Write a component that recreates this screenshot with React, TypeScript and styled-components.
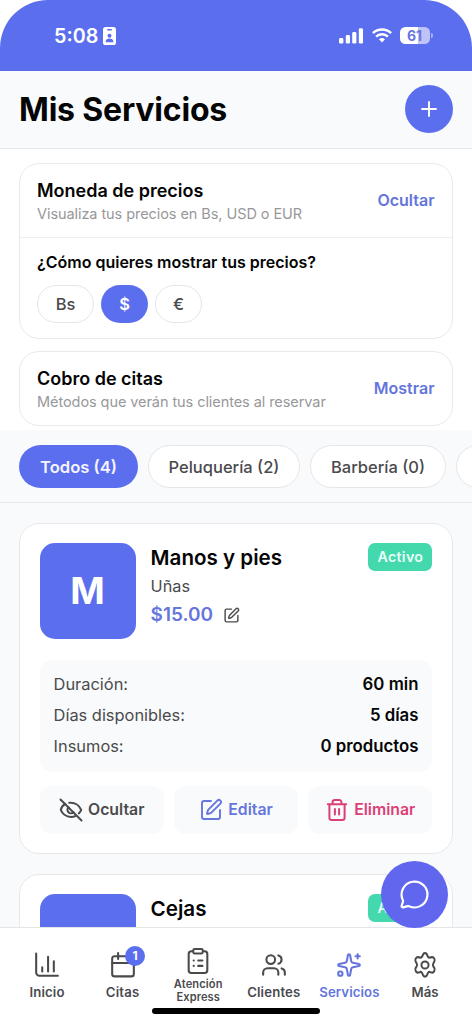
import React from 'react';
import styled, { createGlobalStyle } from 'styled-components';
import { Sparkles, SquarePen, MessageCircle, Plus, Users } from 'lucide-react';

const blue = '#5b6fee';
const ink = '#4a4a4d';

const GlobalStyle = createGlobalStyle`
  * { box-sizing: border-box; }
  body { margin: 0; background: #fff; font-family: Inter, "Liberation Sans", sans-serif; color: #050505; }
  button { font: inherit; border: 0; padding: 0; background: none; color: inherit; }
`;

const Screen = styled.div`
  position: relative;
  width: 472px;
  height: 1024px;
  display: flex;
  flex-direction: column;
  overflow: hidden;
  background: #f9fafc;
  border-radius: 48px 48px 0 0;
`;

const Text = styled.span<{ $size: number; $weight?: number; $color?: string; $line?: number; $track?: number }>`
  display: block;
  white-space: nowrap;
  font-size: ${p => p.$size}px;
  font-weight: ${p => p.$weight ?? 400};
  color: ${p => p.$color ?? '#050505'};
  line-height: ${p => p.$line ?? 20}px;
  letter-spacing: ${p => p.$track ?? 0}px;
`;

const StatusBar = styled.div`
  height: 70.5px;
  flex: none;
  display: flex;
  justify-content: space-between;
  align-items: flex-start;
  padding: 25px 39.5px 0 54px;
  background: ${blue};
`;

const StatusGroup = styled.div<{ $gap: number }>`
  height: 21px;
  display: flex;
  align-items: center;
  gap: ${p => p.$gap}px;
`;

const BatteryWrap = styled.div`
  display: flex;
  align-items: center;
  gap: 1px;
  &::after { content: ''; width: 2px; height: 5px; border-radius: 0 2px 2px 0; background: #a9b1f5; }
`;

const Battery = styled.div`
  width: 30px;
  height: 17px;
  display: grid;
  place-items: center;
  border-radius: 5.5px;
  background: linear-gradient(90deg, #fff 61%, #bfc3f8 61%);
`;

const Header = styled.header`
  height: 78.5px;
  flex: none;
  display: flex;
  align-items: center;
  justify-content: space-between;
  padding: 0 19px;
  border-bottom: 1px solid #e6e7e9;
`;

const Title = styled.h1`
  margin: 0;
  padding-top: 2px;
  font-size: 32px;
  font-weight: 700;
  line-height: 40px;
  letter-spacing: -0.18px;
`;

const AddButton = styled.button`
  width: 48px;
  height: 48px;
  border-radius: 50%;
  display: grid;
  place-items: center;
  background: ${blue};
  color: #fff;
`;

const Settings = styled.section`
  height: 281px;
  flex: none;
  display: flex;
  flex-direction: column;
  gap: 12px;
  padding: 14px 19px 0;
  background: #fff;
`;

const Panel = styled.div`
  border: 1.4px solid #e9e9eb;
  border-radius: 20px;
  background: #fff;
`;

const PanelHead = styled.div`
  height: 73px;
  display: flex;
  align-items: center;
  justify-content: space-between;
  padding: 0 17.5px 0 17px;
`;

const PanelTitles = styled.div`
  padding-top: 2px;
`;

const PanelLink = styled.button`
  padding-bottom: 2px;
`;

const PanelBody = styled.div`
  height: 101px;
  padding: 14px 17px 0;
  border-top: 1px solid #efeff0;
`;

const ChipRow = styled.div`
  display: flex;
  gap: 7px;
  margin-top: 13px;
`;

const Chip = styled.button<{ $width: number; $active?: boolean }>`
  width: ${p => p.$width}px;
  height: 38px;
  display: grid;
  place-items: center;
  border: ${p => (p.$active ? '0' : '1.4px solid #e6e6e8')};
  border-radius: 20px;
  background: ${p => (p.$active ? blue : '#fff')};
`;

const Filters = styled.nav`
  height: 73px;
  flex: none;
  display: flex;
  gap: 10px;
  padding: 15px 0 0 19px;
  overflow: hidden;
  border-bottom: 1px solid #e6e7e9;
`;

const FilterPill = styled(Chip)`
  flex: none;
  height: 43px;
  border-radius: 22px;
`;

const List = styled.main`
  height: 424px;
  flex: none;
  overflow: hidden;
  display: flex;
  flex-direction: column;
  gap: 20px;
  padding: 20px 19px 0;
`;

const Card = styled.article`
  height: 331px;
  flex: none;
  display: flex;
  flex-direction: column;
  border: 1.4px solid #e7e8eb;
  border-radius: 20px;
  background: #fff;
  padding: 19px 19.6px 0;
`;

const CardTop = styled.div`
  display: flex;
  height: 96px;
`;

const Avatar = styled.div`
  width: 96px;
  height: 96px;
  display: grid;
  place-items: center;
  border-radius: 15px;
  background: ${blue};
`;

const CardInfo = styled.div`
  flex: 1;
  padding: 1px 0 0 15px;
`;

const PriceRow = styled.div`
  display: flex;
  align-items: center;
  gap: 10px;
  margin-top: 2px;
`;

const Badge = styled.div`
  width: 64px;
  height: 28px;
  display: grid;
  place-items: center;
  border-radius: 7px;
  background: #43d8ad;
`;

const Details = styled.div`
  height: 112px;
  margin-top: 20.5px;
  padding: 9px 14px;
  border-radius: 13px;
  background: #f9fafb;
`;

const DetailRow = styled.div`
  height: 31.2px;
  display: flex;
  align-items: center;
  justify-content: space-between;
`;

const Actions = styled.div`
  display: grid;
  grid-template-columns: repeat(3, 1fr);
  gap: 10px;
  margin-top: 14.5px;
`;

const Action = styled.button<{ $color: string }>`
  height: 48px;
  display: flex;
  align-items: center;
  justify-content: center;
  gap: 5px;
  border-radius: 12px;
  background: #f9fafb;
  color: ${p => p.$color};
`;

const BottomNav = styled.nav`
  height: 97px;
  flex: none;
  display: grid;
  grid-template-columns: repeat(6, 75.6px);
  justify-content: center;
  border-top: 1px solid #e4e5e7;
  background: #fff;
`;

const NavItem = styled.div<{ $top: number; $gap: number; $color?: string }>`
  display: flex;
  flex-direction: column;
  align-items: center;
  padding-top: ${p => p.$top}px;
  gap: ${p => p.$gap}px;
  color: ${p => p.$color ?? ink};
  text-align: center;
`;

const IconBox = styled.div`
  position: relative;
  height: 26px;
  svg { display: block; }
`;

const Count = styled.div`
  position: absolute;
  left: 15.5px;
  top: -6px;
  width: 20px;
  height: 20px;
  display: grid;
  place-items: center;
  border-radius: 50%;
  background: ${blue};
`;

const ChatButton = styled.button`
  position: absolute;
  left: 381px;
  top: 860.5px;
  width: 67px;
  height: 67px;
  display: grid;
  place-items: center;
  border-radius: 50%;
  background: #6166ef;
  color: #fff;
`;

const HomeIndicator = styled.div`
  position: absolute;
  left: 152px;
  top: 1008px;
  width: 168px;
  height: 6px;
  border-radius: 3px;
  background: #000;
`;

const Line = ({ size = 26, width = 1.9, children }: { size?: number; width?: number; children: React.ReactNode }) => (
  <svg width={size} height={size} viewBox="0 0 24 24" fill="none" stroke="currentColor" strokeWidth={width} strokeLinecap="round" strokeLinejoin="round">
    {children}
  </svg>
);

const IdCard = () => (
  <svg width="13" height="18" viewBox="0 0 13 18">
    <rect width="13" height="18" rx="2.6" fill="#fff" />
    <rect x="4" y="2" width="5" height="1.4" rx=".7" fill={blue} />
    <circle cx="6.5" cy="8.7" r="2" fill={blue} />
    <path d="M2.6 15.2c0-2.5 1.7-3.6 3.9-3.6s3.9 1.1 3.9 3.6z" fill={blue} />
  </svg>
);

const Signal = () => (
  <svg width="25" height="16" viewBox="0 0 25 16" fill="#fff">
    <rect x="0" y="10" width="4.4" height="5.6" rx="1.4" />
    <rect x="6.8" y="7" width="4.2" height="8.6" rx="1.4" />
    <rect x="13.2" y="4" width="4.2" height="11.6" rx="1.4" />
    <rect x="19.8" y="0.2" width="4.2" height="15.4" rx="1.4" />
  </svg>
);

const Wifi = () => (
  <svg width="20" height="15" viewBox="0 0 20 15" fill="none" stroke="#fff" strokeWidth="2.5">
    <path d="M.9 5.2a13.2 13.2 0 0 1 18.2 0" />
    <path d="M4.1 8.7a8.5 8.5 0 0 1 11.8 0" />
    <path d="M7 11.3a4.4 4.4 0 0 1 6 0L10 14.4z" fill="#fff" stroke="none" />
  </svg>
);

const EyeOff = () => (
  <Line size={24} width={2}>
    <path d="M6.3 5.9C4 7.3 2.3 9.6 1.8 11.8 3.2 15.600 7 18.900 12 18.900c1.800 0 3.400-.4 4.800-1.100" />
    <path d="M10.300 4.800c5.900-.6 10.200 3 11.900 7-.5 1.400-1.300 2.600-2.400 3.600" />
    <path d="M9.500 9.300a3.500 3.500 0 1 0 5 5" />
    <path d="M1.500 1.500l21 21" />
  </Line>
);

const Trash = () => (
  <Line size={24} width={2}>
    <path d="M2.800 6.200h18.400M4.400 6.200v13.500A2.300 2.300 0 0 0 6.700 22h10.600a2.300 2.300 0 0 0 2.300-2.300V6.200M7.600 5.900V4.200A2.200 2.200 0 0 1 9.800 2h4.400a2.200 2.200 0 0 1 2.200 2.200v1.700M9.900 11v5.500M14.100 11v5.500" />
  </Line>
);

const Bars = () => (
  <Line>
    <path d="M2 1.500v17.500a3 3 0 0 0 3 3h17M7.600 14v4M13 4.500V18M18.300 8.500V18" />
  </Line>
);

const Calendar = () => (
  <Line>
    <rect x="2" y="4" width="20" height="18.500" rx="2.300" />
    <path d="M7.500 1v5.500M16.500 1v5.500M2 10.200h20" />
  </Line>
);

const Clipboard = () => (
  <Line>
    <rect x="3.400" y="3" width="17.200" height="20" rx="2.500" />
    <rect x="7.600" y="1" width="8.800" height="4" rx="1.200" fill="#fff" />
    <path d="M8 11.500h.1M12.200 11.500h3.900M8 16.500h.1M12.200 16.500h3.900" />
  </Line>
);

const Gear = () => (
  <Line width={1.8}>
    <g transform="translate(0 .2) scale(1 1.110)">
      <path d="M10.100 2.100a2 2 0 0 1 3.800 0l.6 1.300a2 2 0 0 0 2.500 1l1.200-.3c1.900-.4 3.500 2.200 2.400 3.800l-.8 1.200a2.400 2.400 0 0 0 0 2.800l.8 1.200c1.100 1.600-.5 4.200-2.400 3.800l-1.200-.3a2 2 0 0 0-2.500 1l-.6 1.300a2 2 0 0 1-3.800 0l-.6-1.300a2 2 0 0 0-2.500-1l-1.200.3c-1.900.4-3.500-2.200-2.400-3.800l.8-1.200a2.400 2.400 0 0 0 0-2.800l-.8-1.200C2.300 6.300 3.900 3.700 5.800 4.100l1.200.3a2 2 0 0 0 2.500-1z" />
    </g>
    <circle cx="12" cy="12" r="3.300" />
  </Line>
);

const ServiceHead = ({ name, initial, category, price }: { name: string; initial?: string; category?: string; price?: string }) => (
  <CardTop>
    <Avatar>{initial && <Text $size={37} $weight={700} $color="#fff" $line={44}>{initial}</Text>}</Avatar>
    <CardInfo>
      <Text $size={20.6} $weight={600} $line={28}>{name}</Text>
      {category && <Text $size={16.3} $color={ink} $line={29}>{category}</Text>}
      {price && (
        <PriceRow>
          <Text $size={19} $weight={600} $color="#6676dc" $line={24}>{price}</Text>
          <SquarePen size={17} strokeWidth={2} color={ink} />
        </PriceRow>
      )}
    </CardInfo>
    <Badge><Text $size={14.2} $weight={600} $color="#e9fff7" $track={0.3}>Activo</Text></Badge>
  </CardTop>
);

const details = [
  ['Duración:', '60 min'],
  ['Días disponibles:', '5 días'],
  ['Insumos:', '0 productos'],
];

export default function App() {
  return (
    <>
      <GlobalStyle />
      <Screen>
        <StatusBar>
          <StatusGroup $gap={5}>
            <Text $size={19.7} $weight={600} $color="#fff">5:08</Text>
            <IdCard />
          </StatusGroup>
          <StatusGroup $gap={8}>
            <Signal />
            <Wifi />
            <BatteryWrap><Battery><Text $size={14} $weight={700} $color="#6976df" $line={17}>61</Text></Battery></BatteryWrap>
          </StatusGroup>
        </StatusBar>

        <Header>
          <Title>Mis Servicios</Title>
          <AddButton><Plus size={24} strokeWidth={1.9} /></AddButton>
        </Header>

        <Settings>
          <Panel>
            <PanelHead>
              <PanelTitles>
                <Text $size={18} $weight={600} $line={24}>Moneda de precios</Text>
                <Text $size={14.5} $color="#98989b" $line={22} $track={-0.07}>Visualiza tus precios en Bs, USD o EUR</Text>
              </PanelTitles>
              <PanelLink><Text $size={16} $weight={600} $color="#6475dc">Ocultar</Text></PanelLink>
            </PanelHead>
            <PanelBody>
              <Text $size={16} $weight={600}>¿Cómo quieres mostrar tus precios?</Text>
              <ChipRow>
                <Chip $width={57}><Text $size={16.5} $weight={500} $color={ink}>Bs</Text></Chip>
                <Chip $width={47} $active><Text $size={16.5} $weight={600} $color="#fff">$</Text></Chip>
                <Chip $width={47}><Text $size={16.5} $weight={500} $color={ink}>€</Text></Chip>
              </ChipRow>
            </PanelBody>
          </Panel>
          <Panel>
            <PanelHead>
              <PanelTitles>
                <Text $size={18} $weight={600} $line={24}>Cobro de citas</Text>
                <Text $size={14.5} $color="#98989b" $line={22} $track={-0.07}>Métodos que verán tus clientes al reservar</Text>
              </PanelTitles>
              <PanelLink><Text $size={16} $weight={600} $color="#6475dc">Mostrar</Text></PanelLink>
            </PanelHead>
          </Panel>
        </Settings>

        <Filters>
          <FilterPill $width={119} $active><Text $size={16.6} $weight={600} $color="#f4f5ff">Todos (4)</Text></FilterPill>
          <FilterPill $width={152}><Text $size={16.5} $weight={500} $color={ink}>Peluquería (2)</Text></FilterPill>
          <FilterPill $width={136}><Text $size={16.5} $weight={500} $color={ink}>Barbería (0)</Text></FilterPill>
          <FilterPill $width={110} />
        </Filters>

        <List>
          <Card>
            <ServiceHead name="Manos y pies" initial="M" category="Uñas" price="$15.00" />
            <Details>
              {details.map(([label, value]) => (
                <DetailRow key={label}>
                  <Text $size={16.4} $color={ink}>{label}</Text>
                  <Text $size={16.8} $weight={600}>{value}</Text>
                </DetailRow>
              ))}
            </Details>
            <Actions>
              <Action $color={ink}><EyeOff /><Text $size={15.8} $weight={600} $color={ink}>Ocultar</Text></Action>
              <Action $color="#6676dc"><SquarePen size={24} strokeWidth={1.9} /><Text $size={15.8} $weight={600} $color="#6676dc">Editar</Text></Action>
              <Action $color="#dc3f77"><Trash /><Text $size={15.8} $weight={600} $color="#dc3f77">Eliminar</Text></Action>
            </Actions>
          </Card>
          <Card>
            <ServiceHead name="Cejas" />
          </Card>
        </List>

        <BottomNav>
          <NavItem $top={24} $gap={4}>
            <IconBox><Bars /></IconBox>
            <Text $size={13.2} $weight={600} $color={ink} $track={0.15}>Inicio</Text>
          </NavItem>
          <NavItem $top={24} $gap={4}>
            <IconBox><Calendar /><Count><Text $size={12} $weight={700} $color="#fff">1</Text></Count></IconBox>
            <Text $size={13.2} $weight={600} $color={ink} $track={0.2}>Citas</Text>
          </NavItem>
          <NavItem $top={19.5} $gap={4.5}>
            <IconBox><Clipboard /></IconBox>
            <Text $size={11.1} $weight={600} $color={ink} $line={13} $track={0.1}>Atención<br />Express</Text>
          </NavItem>
          <NavItem $top={24} $gap={4}>
            <IconBox><Users size={26} strokeWidth={1.9} /></IconBox>
            <Text $size={13.2} $weight={600} $color={ink} $track={0.15}>Clientes</Text>
          </NavItem>
          <NavItem $top={24} $gap={4} $color="#6475dc">
            <IconBox><Sparkles size={26} strokeWidth={1.9} /></IconBox>
            <Text $size={13.2} $weight={600} $color="#6475dc" $track={0.1}>Servicios</Text>
          </NavItem>
          <NavItem $top={24} $gap={4}>
            <IconBox><Gear /></IconBox>
            <Text $size={13.2} $weight={600} $color={ink}>Más</Text>
          </NavItem>
        </BottomNav>

        <ChatButton><MessageCircle size={31} strokeWidth={1.7} /></ChatButton>
        <HomeIndicator />
      </Screen>
    </>
  );
}
